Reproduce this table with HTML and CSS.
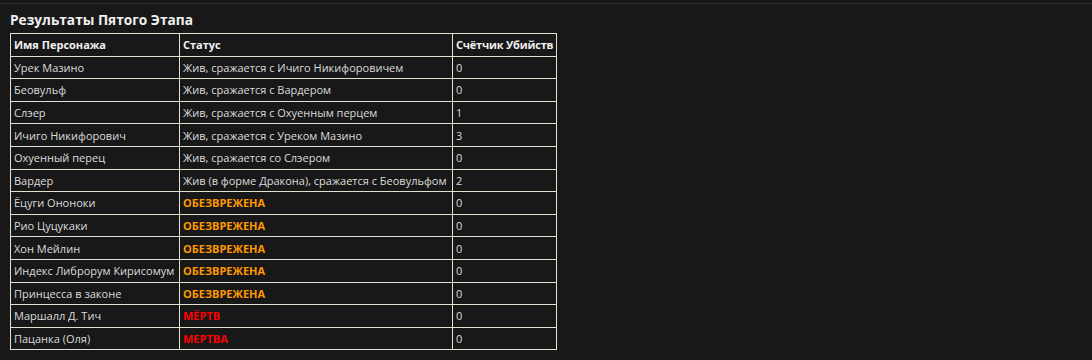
FILE: index.html
```html
<!DOCTYPE html>
<html lang="ru">
<head>
  <meta charset="UTF-8">
  <meta name="viewport" content="width=device-width, initial-scale=1.0">
  <title>Результаты Пятого Этапа</title>
  <link rel="stylesheet" href="styles.css">
</head>
<body>
  <div class="post">
    <h3 class="post-title">Результаты Пятого Этапа</h3>
    <table class="results">
      <thead>
        <tr><th class="col-name">Имя Персонажа</th><th class="col-status">Статус</th><th class="col-kills">Счётчик Убийств</th></tr>
      </thead>
      <tbody>
        <tr><td>Урек Мазино</td><td>Жив, сражается с Ичиго Никифоровичем</td><td>0</td></tr>
        <tr><td>Беовульф</td><td>Жив, сражается с Вардером</td><td>0</td></tr>
        <tr><td>Слэер</td><td>Жив, сражается с Охуенным перцем</td><td>1</td></tr>
        <tr><td>Ичиго Никифорович</td><td>Жив, сражается с Уреком Мазино</td><td>3</td></tr>
        <tr><td>Охуенный перец</td><td>Жив, сражается со Слэером</td><td>0</td></tr>
        <tr><td>Вардер</td><td>Жив (в форме Дракона), сражается с Беовульфом</td><td>2</td></tr>
        <tr><td>Ёцуги Ононоки</td><td class="disarmed">ОБЕЗВРЕЖЕНА</td><td>0</td></tr>
        <tr><td>Рио Цуцукаки</td><td class="disarmed">ОБЕЗВРЕЖЕНА</td><td>0</td></tr>
        <tr><td>Хон Мейлин</td><td class="disarmed">ОБЕЗВРЕЖЕНА</td><td>0</td></tr>
        <tr><td>Индекс Либрорум Кирисомум</td><td class="disarmed">ОБЕЗВРЕЖЕНА</td><td>0</td></tr>
        <tr><td>Принцесса в законе</td><td class="disarmed">ОБЕЗВРЕЖЕНА</td><td>0</td></tr>
        <tr><td>Маршалл Д. Тич</td><td class="dead">МЁРТВ</td><td>0</td></tr>
        <tr><td>Пацанка (Оля)</td><td class="dead">МЕРТВА</td><td>0</td></tr>
      </tbody>
    </table>
  </div>
</body>
</html>
```

FILE: styles.css
```css
/* Dark forum post with a results table */
body {
  margin: 0;
  padding-top: 3px;
  background: #181818;
  color: #dcdcdc;
  font-family: "Open Sans", "Noto Sans", sans-serif;
  font-size: 11px;
}
.post {
  border-top: 1px solid #2e2e2e;
  padding: 0 10px;
}
.post-title {
  margin: 0;
  padding: 6px 0 4px;
  font-size: 13.7px;
  line-height: 19px;
  font-weight: bold;
  color: #f0f0f0;
}
.results {
  border-collapse: collapse;
  border: 1px solid #e4e0d0;
}
.results th,
.results td {
  border: 1px solid #e4e0d0;
  padding: 3.3px 3px;
  line-height: 15px;
  text-align: left;
  white-space: nowrap;
}
.results th {
  font-weight: bold;
  color: #f0f0f0;
}
.col-name { width: 162px; }
.col-status { width: 266px; }
.col-kills { letter-spacing: -0.2px; }
.disarmed {
  color: #ff9900;
  font-weight: bold;
}
.dead {
  color: #ff0000;
  font-weight: bold;
}
```
